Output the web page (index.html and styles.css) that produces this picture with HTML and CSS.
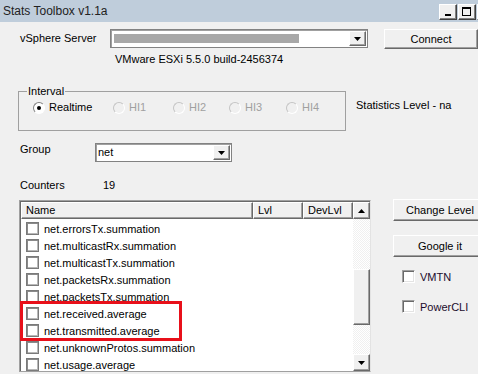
FILE: index.html
```html
<!DOCTYPE html>
<html lang="en">
<head>
    <meta charset="UTF-8">
    <title>Stats Toolbox v1.1a</title>
    <link rel="stylesheet" href="styles.css">
</head>
<body>
    <div class="window">
        <div class="titlebar">
            <span class="title">Stats Toolbox v1.1a</span>
            <div class="winctl">
                <span class="wbtn"><i class="ico-min"></i></span>
                <span class="wbtn"><i class="ico-max"></i></span>
                <span class="wbtn"></span>
            </div>
        </div>

        <div class="server-row">
            <span class="lbl lbl-server">vSphere Server</span>
            <div class="combo combo-server">
                <span class="hidden-host"></span>
                <span class="drop"><svg width="7" height="4" viewBox="0 0 7 4"><path d="M0 0h7L3.5 4z" fill="#000"/></svg></span>
            </div>
            <button class="btn btn-connect">Connect</button>
        </div>
        <div class="build">VMware ESXi 5.5.0 build-2456374</div>

        <div class="interval-row">
            <fieldset class="group">
                <legend>Interval</legend>
                <div class="radios">
                    <label class="radio-item w-rt"><span class="radio on"></span>Realtime</label>
                    <label class="radio-item w-hi1 off"><span class="radio"></span>HI1</label>
                    <label class="radio-item w-hi2 off"><span class="radio"></span>HI2</label>
                    <label class="radio-item w-hi3 off"><span class="radio"></span>HI3</label>
                    <label class="radio-item off"><span class="radio"></span>HI4</label>
                </div>
            </fieldset>
            <span class="stat-level">Statistics Level - na</span>
        </div>

        <div class="group-row">
            <span class="lbl lbl-group">Group</span>
            <div class="combo combo-group">
                <span class="combo-text">net</span>
                <span class="drop"><svg width="7" height="4" viewBox="0 0 7 4"><path d="M0 0h7L3.5 4z" fill="#000"/></svg></span>
            </div>
        </div>

        <div class="counters-row">
            <span class="lbl lbl-counters">Counters</span>
            <span>19</span>
        </div>

        <div class="main">
            <div class="list">
                <div class="list-inner">
                    <div class="list-main">
                        <div class="list-head">
                            <span class="col col-name">Name</span>
                            <span class="col col-lvl">Lvl</span>
                            <span class="col col-dev">DevLvl</span>
                        </div>
                        <div class="list-body">
                            <div class="item"><span class="check"></span>net.errorsTx.summation</div>
                            <div class="item"><span class="check"></span>net.multicastRx.summation</div>
                            <div class="item"><span class="check"></span>net.multicastTx.summation</div>
                            <div class="item"><span class="check"></span>net.packetsRx.summation</div>
                            <div class="item"><span class="check"></span>net.packetsTx.summation</div>
                            <div class="item"><span class="check"></span>net.received.average</div>
                            <div class="item"><span class="check"></span>net.transmitted.average</div>
                            <div class="item"><span class="check"></span>net.unknownProtos.summation</div>
                            <div class="item"><span class="check"></span>net.usage.average</div>
                        </div>
                    </div>
                    <div class="vscroll">
                        <span class="sbtn"><svg width="7" height="4" viewBox="0 0 7 4"><path d="M0 4h7L3.5 0z" fill="#000"/></svg></span>
                        <div class="track"><span class="thumb"></span></div>
                        <span class="sbtn"><svg width="7" height="4" viewBox="0 0 7 4"><path d="M0 0h7L3.5 4z" fill="#000"/></svg></span>
                    </div>
                </div>
                <div class="mark"></div>
            </div>

            <div class="side">
                <button class="btn btn-side">Change Level</button>
                <button class="btn btn-side btn-google">Google it</button>
                <label class="opt opt-vmtn"><span class="check3d"></span>VMTN</label>
                <label class="opt opt-pcli"><span class="check3d"></span>PowerCLI</label>
            </div>
        </div>
    </div>
</body>
</html>
```

FILE: styles.css
```css
body {
    margin: 0;
    font-family: "Liberation Sans", Arial, sans-serif;
    font-size: 11px;
    color: #000;
}
.window {
    width: 478px;
    height: 374px;
    background-color: #f0f0f0;
    overflow: hidden;
}
.titlebar {
    height: 22px;
    background-color: #bfcddb;
    display: flex;
    justify-content: space-between;
    padding-left: 3px;
}
.title {
    font-size: 12px;
    line-height: 22px;
    color: #222;
}
.winctl {
    display: flex;
    margin-top: 4px;
    margin-right: -17px;
}
.wbtn {
    width: 18px;
    height: 16px;
    box-sizing: border-box;
    margin-left: 1px;
    background-color: #f0f0f0;
    border: 1px solid;
    border-color: #fff #404040 #404040 #fff;
    box-shadow: inset -1px -1px #808080;
    position: relative;
}
.ico-min {
    position: absolute;
    left: 5px;
    top: 9px;
    width: 6px;
    height: 2px;
    background: #000;
}
.ico-max {
    position: absolute;
    left: 3px;
    top: 2px;
    width: 9px;
    height: 9px;
    box-sizing: border-box;
    border: 1px solid #000;
    border-top-width: 2px;
}

.lbl {
    display: inline-block;
}
.server-row {
    display: flex;
    align-items: flex-start;
    margin-top: 7px;
    padding-left: 20px;
    line-height: 13px;
}
.lbl-server {
    width: 92px;
    margin-top: 3px;
}
.combo {
    display: flex;
    align-items: center;
    height: 19px;
    box-sizing: border-box;
    border: 1px solid #828282;
    box-shadow: inset 1px 1px #a0a0a0;
    background-color: #fff;
}
.combo-server {
    width: 265px;
}
.hidden-host {
    width: 185px;
    height: 9px;
    margin-left: 3px;
    background-color: #a8a8a8;
    filter: blur(0.4px);
}
.drop {
    width: 17px;
    height: 15px;
    box-sizing: border-box;
    margin-left: auto;
    margin-right: 1px;
    display: flex;
    align-items: center;
    justify-content: center;
    background-color: #f0f0f0;
    border: 1px solid;
    border-color: #fff #696969 #696969 #fff;
    box-shadow: inset -1px -1px #a0a0a0;
}
.btn {
    font-family: "Liberation Sans", Arial, sans-serif;
    font-size: 11px;
    color: #000;
    background-color: #f0f0f0;
    border: 1px solid;
    border-color: #fff #696969 #696969 #fff;
    box-shadow: inset -1px -1px #a0a0a0;
    padding: 0;
    box-sizing: border-box;
}
.btn-connect {
    width: 94px;
    height: 20px;
    margin-left: 16px;
    flex-shrink: 0;
}
.build {
    margin-top: 4px;
    padding-left: 115px;
    line-height: 13px;
}

.interval-row {
    display: flex;
    align-items: flex-start;
    margin-top: 19px;
    padding-left: 18px;
    line-height: 13px;
}
.group {
    width: 328px;
    box-sizing: border-box;
    margin: 0;
    padding: 3px 0 16px 14px;
    border: 1px solid #a0a0a0;
}
.group legend {
    padding: 0 1px;
    margin-left: -6px;
}
.radios {
    display: flex;
    align-items: center;
}
.radio-item {
    display: flex;
    align-items: center;
}
.w-rt { width: 80px; }
.w-hi1 { width: 60px; }
.w-hi2 { width: 56px; }
.w-hi3 { width: 57px; }
.radio {
    width: 12px;
    height: 12px;
    box-sizing: border-box;
    border-radius: 50%;
    margin-right: 4px;
    border: 1px solid;
    border-color: #808080 #fff #fff #808080;
    background-color: #fff;
    position: relative;
}
.radio.on::after {
    content: "";
    position: absolute;
    left: 3px;
    top: 3px;
    width: 4px;
    height: 4px;
    border-radius: 50%;
    background: #000;
}
.off {
    color: #a0a0a0;
}
.off .radio {
    border-color: #c4c4c4 #fff #fff #c4c4c4;
    background-color: #f0f0f0;
}
.stat-level {
    margin-left: 10px;
    margin-top: 14px;
}

.group-row {
    display: flex;
    align-items: flex-start;
    margin-top: 12px;
    padding-left: 20px;
    line-height: 13px;
}
.lbl-group {
    width: 75px;
}
.combo-group {
    width: 137px;
}
.combo-text {
    padding-left: 2px;
}

.counters-row {
    display: flex;
    margin-top: 17px;
    padding-left: 20px;
    line-height: 13px;
}
.lbl-counters {
    width: 83px;
}

.main {
    display: flex;
    margin-top: 8px;
    padding-left: 19px;
}
.list {
    position: relative;
    width: 352px;
    height: 172px;
    box-sizing: border-box;
    border: 1px solid #a0a0a0;
    border-right-color: #e3e3e3;
    background-color: #fff;
}
.list-inner {
    display: flex;
    height: 100%;
    border-left: 1px solid #696969;
    border-top: 1px solid #696969;
    box-sizing: border-box;
}
.list-main {
    width: 332px;
}
.list-head {
    display: flex;
    height: 17px;
    line-height: 15px;
}
.col {
    box-sizing: border-box;
    padding-left: 4px;
    background-color: #f0f0f0;
    border: 1px solid;
    border-color: #fff #696969 #696969 #fff;
    box-shadow: inset -1px -1px #a0a0a0;
}
.col-name { width: 232px; }
.col-lvl { width: 50px; }
.col-dev { width: 50px; }
.list-body {
    padding-top: 1px;
}
.item {
    display: flex;
    align-items: center;
    height: 17px;
    padding-left: 5px;
}
.check {
    width: 13px;
    height: 13px;
    box-sizing: border-box;
    margin-right: 5px;
    border: 1px solid #7a7a7a;
    box-shadow: inset 1px 1px #8a8a8a, inset -1px -1px #b8b8b8;
    background-color: #fff;
}
.vscroll {
    width: 17px;
    display: flex;
    flex-direction: column;
}
.sbtn {
    height: 17px;
    box-sizing: border-box;
    display: flex;
    align-items: center;
    justify-content: center;
    background-color: #f0f0f0;
    border: 1px solid;
    border-color: #fff #696969 #696969 #fff;
    box-shadow: inset -1px -1px #a0a0a0;
}
.track {
    flex: 1;
    padding-top: 50px;
    background-color: #f0f0f0;
    background-image: repeating-conic-gradient(#fff 0 25%, #f0f0f0 0 50%);
    background-size: 2px 2px;
}
.thumb {
    display: block;
    height: 56px;
    box-sizing: border-box;
    background-color: #f0f0f0;
    border: 1px solid;
    border-color: #fff #696969 #696969 #fff;
    box-shadow: inset -1px -1px #a0a0a0;
}
.mark {
    position: absolute;
    left: 0;
    top: 100px;
    width: 162px;
    height: 40px;
    box-sizing: border-box;
    border: 3px solid #e8101a;
}

.side {
    display: flex;
    flex-direction: column;
    align-items: flex-start;
    margin-left: 22px;
    margin-top: -1px;
}
.btn-side {
    width: 94px;
    height: 22px;
}
.btn-google {
    margin-top: 14px;
}
.opt {
    display: flex;
    align-items: center;
    height: 13px;
    padding-left: 9px;
    color: #1c0c2c;
}
.opt-vmtn {
    margin-top: 13px;
}
.opt-pcli {
    margin-top: 17px;
}
.check3d {
    width: 13px;
    height: 13px;
    box-sizing: border-box;
    margin-right: 5px;
    border: 1px solid;
    border-color: #a0a0a0 #fff #fff #a0a0a0;
    box-shadow: inset 1px 1px #696969, inset -1px -1px #e3e3e3;
    background-color: #fff;
}
```
